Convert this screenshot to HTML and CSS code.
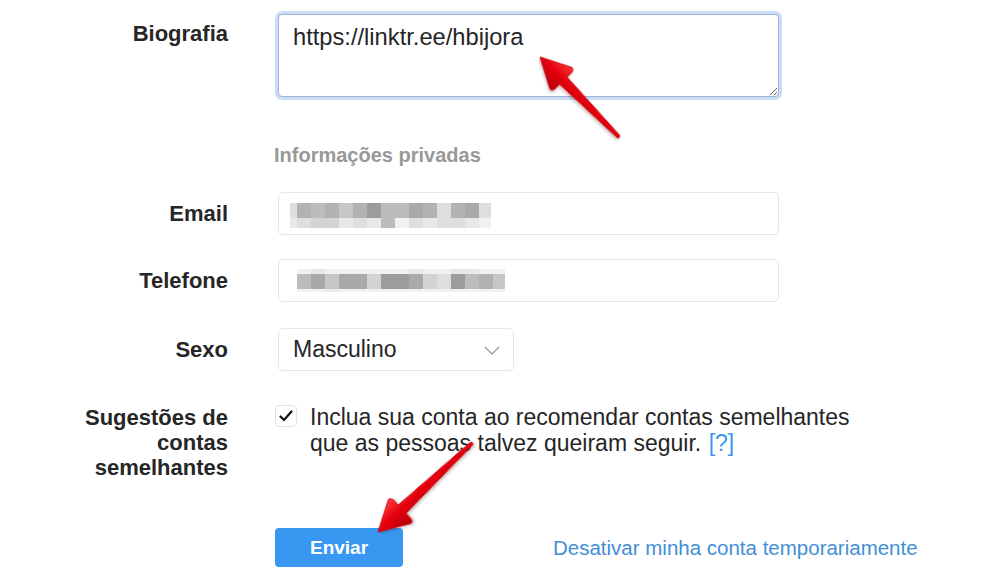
FILE: index.html
```html
<!DOCTYPE html>
<html lang="pt-BR">
<head>
<meta charset="utf-8">
<title>Editar perfil</title>
<link rel="stylesheet" href="styles.css">
</head>
<body>
<div class="page">
  <form class="form">
    <div class="row row-bio">
      <label class="lbl lbl-top" for="bio">Biografia</label>
      <textarea id="bio" class="textarea" readonly>https://linktr.ee/hbijora</textarea>
    </div>

    <div class="row row-section">
      <span></span>
      <h2 class="section">Informações privadas</h2>
    </div>

    <div class="row row-email">
      <label class="lbl">Email</label>
      <div class="input">
        <div class="mosaic mosaic-email">
          <div class="mrow mrow-main">
            <span class="c half s7"></span><span class="c s3"></span><span class="c s4"></span><span class="c s3"></span><span class="c s5"></span><span class="c s3"></span><span class="c s1"></span><span class="c s4"></span><span class="c s4"></span><span class="c s2"></span><span class="c s3"></span><span class="c s7"></span><span class="c s3"></span><span class="c s2"></span><span class="c end s7"></span>
          </div>
          <div class="mrow mrow-sub">
            <span class="c half s8"></span><span class="c s7"></span><span class="c s6"></span><span class="c s6"></span><span class="c s8"></span><span class="c s7"></span><span class="c s8"></span><span class="c s4"></span><span class="c s9"></span><span class="c s7"></span><span class="c s8"></span><span class="c s7"></span><span class="c s7"></span><span class="c s8"></span><span class="c end s9"></span>
          </div>
        </div>
      </div>
    </div>

    <div class="row row-tel">
      <label class="lbl">Telefone</label>
      <div class="input">
        <div class="mosaic mosaic-tel">
          <div class="mrow mrow-top">
            <span class="c s9"></span><span class="c s8"></span><span class="c s9"></span><span class="c s9"></span><span class="c s9"></span><span class="c s9"></span><span class="c s9"></span><span class="c s9"></span><span class="c s8"></span><span class="c s9"></span><span class="c s9"></span><span class="c s8"></span><span class="c s8"></span><span class="c s9"></span><span class="c end s9"></span>
          </div>
          <div class="mrow mrow-main">
            <span class="c s4"></span><span class="c s2"></span><span class="c s5"></span><span class="c s2"></span><span class="c s2"></span><span class="c s6"></span><span class="c s1"></span><span class="c s1"></span><span class="c s2"></span><span class="c s6"></span><span class="c s7"></span><span class="c s1"></span><span class="c s4"></span><span class="c s3"></span><span class="c end s5"></span>
          </div>
          <div class="mrow mrow-bot">
            <span class="c s9"></span><span class="c s9"></span><span class="c s8"></span><span class="c s9"></span><span class="c s9"></span><span class="c s9"></span><span class="c s9"></span><span class="c s9"></span><span class="c s9"></span><span class="c s9"></span><span class="c s9"></span><span class="c s9"></span><span class="c s9"></span><span class="c s9"></span><span class="c end s9"></span>
          </div>
        </div>
      </div>
    </div>

    <div class="row row-sexo">
      <label class="lbl">Sexo</label>
      <div class="select">
        <span>Masculino</span>
        <svg class="chev" width="16" height="9" viewBox="0 0 16 9"><polyline points="1,1 8,8 15,1" fill="none" stroke="#9a9a9a" stroke-width="1.3"/></svg>
      </div>
    </div>

    <div class="row row-sug">
      <label class="lbl lbl-multi">Sugestões de<br>contas<br>semelhantes</label>
      <div class="check-wrap">
        <span class="checkbox">
          <svg width="14" height="12" viewBox="0 0 14 12"><polyline points="1.5,6.5 5,10 12.5,1.5" fill="none" stroke="#111" stroke-width="2.2" stroke-linecap="round" stroke-linejoin="round"/></svg>
        </span>
        <p class="check-text">Inclua sua conta ao recomendar contas semelhantes<br>que as pessoas talvez queiram seguir. <a class="help" href="#">[?]</a></p>
      </div>
    </div>

    <div class="row row-actions">
      <span></span>
      <div class="actions">
        <button type="button" class="btn">Enviar</button>
        <a class="link" href="#">Desativar minha conta temporariamente</a>
      </div>
    </div>
  </form>

  <svg class="arrows" width="984" height="586" viewBox="0 0 984 586">
    <defs>
      <linearGradient id="ag" x1="0" y1="-16" x2="0" y2="16" gradientUnits="userSpaceOnUse">
        <stop offset="0" stop-color="#ff3b3b"/>
        <stop offset="0.45" stop-color="#e60010"/>
        <stop offset="1" stop-color="#b3000a"/>
      </linearGradient>
      <filter id="sh" x="-20%" y="-20%" width="140%" height="140%">
        <feDropShadow dx="1" dy="2" stdDeviation="1.5" flood-color="#000" flood-opacity="0.25"/>
      </filter>
    </defs>
    <g transform="translate(540,57) rotate(45.4)" filter="url(#sh)">
      <path d="M0,0 L29,-15 Q33,-16 33,-12 L33,-5 L112,-1.6 Q114,0 112,1.6 L33,5 L33,12 Q33,16 29,15 Z" fill="url(#ag)" stroke="#d0000c" stroke-width="1" stroke-linejoin="round"/>
    </g>
    <g transform="translate(378,532) rotate(-43.4)" filter="url(#sh)">
      <path d="M0,0 L29,-16 Q33,-17 33,-13 L33,-5.5 L129,-1.6 Q131,0 129,1.6 L33,5.5 L33,13 Q33,17 29,16 Z" fill="url(#ag)" stroke="#d0000c" stroke-width="1" stroke-linejoin="round"/>
    </g>
  </svg>
</div>
</body>
</html>
```

FILE: styles.css
```css
* { box-sizing: border-box; }

html, body {
  margin: 0;
  padding: 0;
  background: #ffffff;
}

body {
  font-family: "Liberation Sans", Arial, Helvetica, sans-serif;
  color: #262626;
}

.page {
  position: relative;
  width: 984px;
  height: 586px;
  overflow: hidden;
}

.form {
  margin: 0;
  padding-top: 14px;
}

.row {
  display: grid;
  grid-template-columns: 228px 501px;
  column-gap: 50px;
  align-items: center;
}

.lbl {
  font-size: 22px;
  font-weight: 700;
  line-height: 28px;
  text-align: right;
  color: #262626;
}

.row-bio { align-items: start; }
.lbl-top { padding-top: 6px; }

.textarea {
  display: block;
  width: 501px;
  height: 83px;
  margin: 0;
  padding: 8px 14px;
  font-family: inherit;
  font-size: 23.7px;
  line-height: 28px;
  color: #262626;
  border: 1px solid #9db3cf;
  border-radius: 4px;
  box-shadow: 0 0 0 3px #c9ddf6;
  resize: vertical;
  outline: none;
  overflow: hidden;
  background: #fff;
}

.row-section { margin-top: 46px; }
.section {
  margin: 0 0 0 -4px;
  font-size: 20px;
  line-height: 24px;
  font-weight: 700;
  color: #999999;
}

.row-email { margin-top: 25px; }
.row-tel { margin-top: 24px; }
.row-sexo { margin-top: 26px; }

.input {
  height: 43px;
  border: 1px solid #e6e6e6;
  border-radius: 5px;
  background: #fff;
  display: flex;
  align-items: center;
}

.mosaic {
  display: flex;
  flex-direction: column;
}
.mosaic-email { margin-left: 11px; margin-top: 4px; }
.mosaic-tel { margin-left: 18px; margin-top: 0; }

.mrow { display: flex; }
.mrow-main { height: 15px; }
.mrow-sub { height: 10px; }
.mrow-top { height: 5px; }
.mrow-bot { height: 3px; }

.c { width: 14px; height: 100%; }
.c.half { width: 7px; }
.c.end { width: 12px; }

.s1 { background: #9c9c9c; }
.s2 { background: #a9a9a9; }
.s3 { background: #b2b2b2; }
.s4 { background: #bcbcbc; }
.s5 { background: #c7c7c7; }
.s6 { background: #d3d3d3; }
.s7 { background: #dedede; }
.s8 { background: #e8e8e8; }
.s9 { background: #f1f1f1; }

.select {
  width: 236px;
  height: 43px;
  border: 1px solid #e6e6e6;
  border-radius: 5px;
  background: #fff;
  display: flex;
  align-items: center;
  justify-content: space-between;
  padding: 0 13px 0 14px;
  font-size: 23px;
  color: #262626;
}
.chev { margin-top: 2px; }

.row-sug {
  margin-top: 34px;
  align-items: start;
}
.lbl-multi { line-height: 25px; }

.check-wrap {
  display: flex;
  align-items: flex-start;
  gap: 13px;
  margin-left: -3px;
}

.checkbox {
  flex: 0 0 auto;
  width: 22px;
  height: 22px;
  border: 1px solid #e2e2e2;
  border-radius: 4px;
  display: flex;
  align-items: center;
  justify-content: center;
  background: #fff;
}

.check-text {
  margin: 0;
  font-size: 23px;
  line-height: 25.5px;
  color: #262626;
  white-space: nowrap;
}

.help {
  color: #3897f0;
  text-decoration: none;
  margin-left: 1px;
}

.row-actions { margin-top: 48px; }

.actions {
  display: flex;
  align-items: center;
  gap: 150px;
  margin-left: -3px;
  white-space: nowrap;
}

.btn {
  flex: 0 0 128px;
  width: 128px;
  height: 39px;
  border: 0;
  border-radius: 4px;
  background: #3897f0;
  color: #fff;
  font-family: inherit;
  font-size: 19px;
  font-weight: 700;
  padding: 0;
}

.link {
  flex: 0 0 auto;
  font-size: 20.5px;
  color: #3f8fd6;
  text-decoration: none;
}

.arrows {
  position: absolute;
  left: 0;
  top: 0;
  pointer-events: none;
}
```
